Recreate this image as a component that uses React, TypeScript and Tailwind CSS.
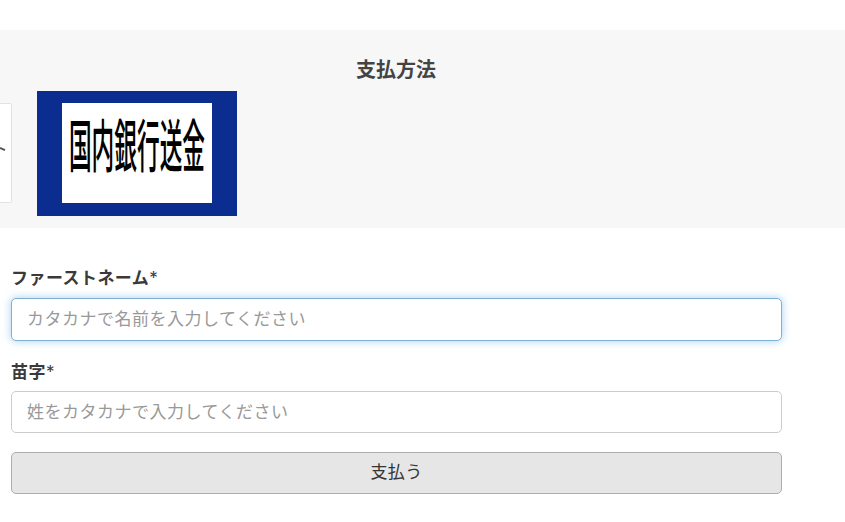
export default function App() {
  return (
    <div className="w-[845px] h-[522px] overflow-hidden bg-white text-[#3a3a3a] font-['Inter','Noto_Sans_CJK_JP',sans-serif]">
      <div className="h-[30px]" />
      <section className="h-[198px] bg-[#f7f7f7] overflow-hidden">
        <h2 className="w-[792px] h-[61px] pt-[27px] text-center text-[20px] leading-[26px] font-bold text-[#444444]">支払方法</h2>
        <div className="flex items-start h-[125px]">
          <div className="w-[100px] h-[100px] mt-[12px] ml-[-88px] shrink-0 bg-white border border-[#e2e2e2] rounded-[2px] flex items-center justify-end">
            <svg width="6" height="6" viewBox="0 0 6 6" className="mt-[-6px] mr-[5px]"><path d="M0 1 L5 3.2" stroke="#555" strokeWidth="2" fill="none" /></svg>
          </div>
          <div className="w-[200px] h-[125px] ml-[25px] shrink-0 bg-[#0a2d8f] pt-[12px] pl-[25px]">
            <div className="w-[150px] h-[100px] bg-white flex items-center justify-center overflow-hidden pb-[16px]">
              <span className="block whitespace-nowrap text-[22.7px] leading-none text-black font-medium scale-y-[2.5] font-['Noto_Sans_CJK_JP',sans-serif]">国内銀行送金</span>
            </div>
          </div>
        </div>
      </section>
      <form className="w-[771px] ml-[11px] pt-[38px]">
        <label className="block h-[32px] text-[17px] leading-[24px] tracking-[0.45px] font-bold text-[#3a3a3a]">ファーストネーム<span className="font-normal">*</span></label>
        <input
          readOnly
          placeholder="カタカナで名前を入力してください"
          className="block w-full h-[43px] px-[15px] pb-[2px] rounded-[5px] border border-[#7fb0d6] bg-white text-[17px] tracking-[0.5px] shadow-[0_0_8px_rgba(102,175,233,0.6)] outline-none placeholder:text-[#999999]"
        />
        <label className="block h-[29px] mt-[21px] text-[17px] leading-[20px] tracking-[0.45px] font-bold text-[#3a3a3a]">苗字<span className="font-normal">*</span></label>
        <input
          readOnly
          placeholder="姓をカタカナで入力してください"
          className="block w-full h-[42px] px-[15px] rounded-[5px] border border-[#cccccc] bg-white text-[17px] tracking-[0.5px] outline-none placeholder:text-[#999999]"
        />
        <button type="button" className="block w-full h-[42px] mt-[19px] rounded-[5px] border border-[#adadad] bg-[#e6e6e6] text-[17px] tracking-[0.4px] text-[#333333]">支払う</button>
      </form>
    </div>
  );
}
